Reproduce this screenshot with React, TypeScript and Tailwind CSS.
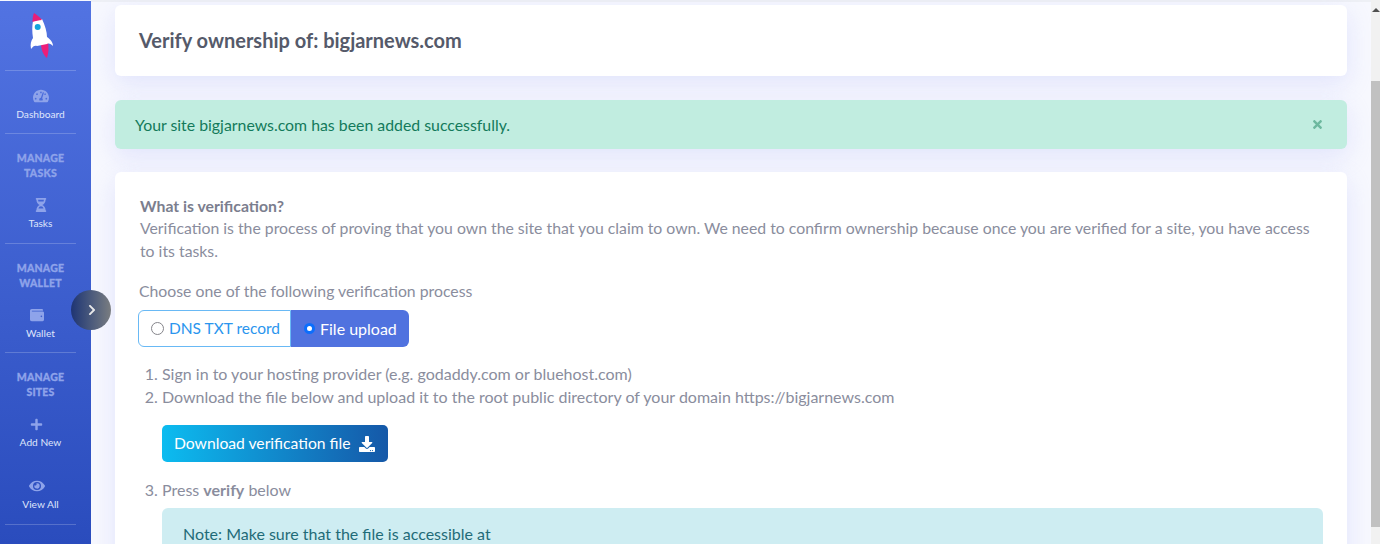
import React from "react";
import { FaChevronRight, FaDownload, FaEye, FaHourglassHalf, FaPlus, FaTachometerAlt, FaTimes, FaWallet } from "react-icons/fa";

function Rocket() {
  return (
    <svg width="26" height="46" viewBox="0 0 26 46" className="block">
      <path d="M12 30 L19 29 C20 35 19.5 40 18 45 C14 42 12 36 12 30 Z" fill="#ec1e79" />
      <path d="M4 8 L13 6 C16 12 18 19 18 24 C21 26 24 29 24 33 C22 31 20 30 18 31 L8 33 C6 32 4 33 2 36 C1 31 2 28 4 25 C3 19 3 13 4 8 Z" fill="#ffffff" />
      <path d="M3.5 9 C3.5 5 4 2 5 0 C8 2 11 4 13 7 C10 7 6.5 8 3.5 9 Z" fill="#e91e79" />
      <circle cx="8.7" cy="14" r="3" fill="#12a5dc" />
    </svg>
  );
}

function NavItem({ icon, label, className }: { icon: React.ReactNode; label: string; className?: string }) {
  return (
    <div className={`flex flex-col items-center text-[10.2px] leading-[14px] text-[#dfe5fb] ${className ?? ""}`}>
      <div className="h-[18px] flex items-center text-[#8ea3ea]">{icon}</div>
      <span className="mt-[2px]">{label}</span>
    </div>
  );
}

function SectionLabel({ children }: { children: React.ReactNode }) {
  return (
    <div className="text-center text-[10.5px] leading-[15px] font-black tracking-[0.2px] text-[#8ea3ea] [-webkit-text-stroke:0.3px_#8ea3ea] px-3">
      {children}
    </div>
  );
}

function Divider() {
  return <div className="mx-[5px] h-px bg-white/20" />;
}

const cardShadow = "shadow-[0_8px_24px_rgba(200,205,250,0.45)]";

export default function App() {
  return (
    <div className="font-['Lato','Open_Sans',sans-serif] relative flex h-[544px] w-[1380px] overflow-hidden bg-[#f7f8fe]">
      <aside className="w-[91px] shrink-0 flex flex-col mt-px pr-[10px] bg-gradient-to-b from-[#5273e2] to-[#2a4cbd]">
        <div className="h-[69px] flex justify-center items-start pt-[12px] pl-[3px]">
          <Rocket />
        </div>
        <Divider />
        <NavItem className="h-[62px] pt-[16px]" icon={<FaTachometerAlt size={16} />} label="Dashboard" />
        <Divider />
        <div className="pt-[17px] h-[54px]">
          <SectionLabel>MANAGE TASKS</SectionLabel>
        </div>
        <NavItem className="h-[55px] pt-[8px]" icon={<FaHourglassHalf size={14} />} label="Tasks" />
        <Divider />
        <div className="pt-[17px] h-[54px]">
          <SectionLabel>MANAGE WALLET</SectionLabel>
        </div>
        <NavItem className="h-[54px] pt-[8px]" icon={<FaWallet size={14} className="-ml-2" />} label="Wallet" />
        <Divider />
        <div className="pt-[17px] h-[55px]">
          <SectionLabel>MANAGE SITES</SectionLabel>
        </div>
        <NavItem className="h-[60px] pt-[7px]" icon={<FaPlus size={13} className="-ml-2" />} label="Add New" />
        <NavItem className="h-[56px] pt-[9px]" icon={<FaEye size={16} className="-ml-2" />} label="View All" />
        <Divider />
      </aside>

      <div className="absolute left-[71px] top-[290px] w-[40px] h-[40px] rounded-full bg-gradient-to-r from-[#1f3473] to-[#7a7d80] flex items-center justify-center">
        <FaChevronRight size={12} className="ml-[2px] text-[#e8e8e8]" />
      </div>

      <main className="w-[1280px] shrink-0 pl-[24px] pr-[24px] pt-[3px] border-t-2 border-[#eef0f5] text-[16px] text-[#8a8d9d]">
        <div className={`h-[71px] flex items-center bg-white rounded-[6px] px-[24px] pb-[2px] ${cardShadow}`}>
          <h1 className="text-[20px] font-bold text-[#555a6a]">Verify ownership of: bigjarnews.com</h1>
        </div>

        <div className={`mt-[24px] h-[49px] flex items-center justify-between bg-[#c1ede0] rounded-[6px] pl-[20px] pr-[23px] text-[15.85px] text-[#137a5b] ${cardShadow}`}>
          <span>Your site bigjarnews.com has been added successfully.</span>
          <FaTimes size={13} className="text-[#6db89f]" />
        </div>

        <section className={`mt-[23px] bg-white rounded-[6px] pl-[23px] pr-[24px] pt-[23px] pb-[40px] ${cardShadow}`}>
          <div className="pl-[2px] text-[15.8px]">
            <div className="leading-[22px] font-bold text-[#7b7e8e]">What is verification?</div>
            <p className="leading-[22.5px]">
              Verification is the process of proving that you own the site that you claim to own. We need to confirm ownership because once you are verified for a site, you have access to its tasks.
            </p>
          </div>

          <p className="mt-[18px] pl-px leading-[22px] text-[15.8px]">Choose one of the following verification process</p>

          <div className="mt-[8px] flex h-[37px]">
            <div className="flex items-center gap-[5px] w-[153px] pl-[12px] rounded-l-[6px] border border-[#69b9f5] bg-white whitespace-nowrap text-[#2a95ee] text-[15.5px]">
              <span className="w-[13px] h-[13px] rounded-full border border-[#85858b] bg-white" />
              DNS TXT record
            </div>
            <div className="flex items-center gap-[5px] w-[118px] pl-[13px] rounded-r-[6px] bg-[#5072df] text-white text-[16px]">
              <span className="w-[11px] h-[11px] rounded-full border-[3px] border-[#0b6efd] bg-white" />
              File upload
            </div>
          </div>

          <ol className="mt-[15px] pl-[24px] list-decimal leading-[23px]">
            <li>Sign in to your hosting provider (e.g. godaddy.com or bluehost.com)</li>
            <li>
              Download the file below and upload it to the root public directory of your domain https://bigjarnews.com
              <div className="mt-[17px] mb-[16px] flex">
                <button className="flex items-center gap-[8px] h-[37px] w-[226px] pl-[12px] rounded-[5px] whitespace-nowrap bg-gradient-to-r from-[#0cbcf0] to-[#1558a8] text-white text-[15.7px]">
                  Download verification file
                  <FaDownload size={16} />
                </button>
              </div>
            </li>
            <li>
              Press <b className="font-bold">verify</b> below
              <div className="mt-[7px] rounded-[6px] bg-[#ceedf2] text-[#1f6b78] pl-[21px] pr-[21px] pt-[14px] pb-[20px] leading-[23px]">
                Note: Make sure that the file is accessible at
              </div>
            </li>
          </ol>
        </section>
      </main>

      <div className="w-[9px] shrink-0 flex flex-col bg-[#f1f1f1]">
        <div className="h-[81px] flex justify-center pt-[8px]">
          <div className="w-0 h-0 border-l-[4px] border-r-[4px] border-b-[4px] border-l-transparent border-r-transparent border-b-[#505050]" />
        </div>
        <div className="h-[446px] bg-[#c1c1c1]" />
      </div>
    </div>
  );
}
